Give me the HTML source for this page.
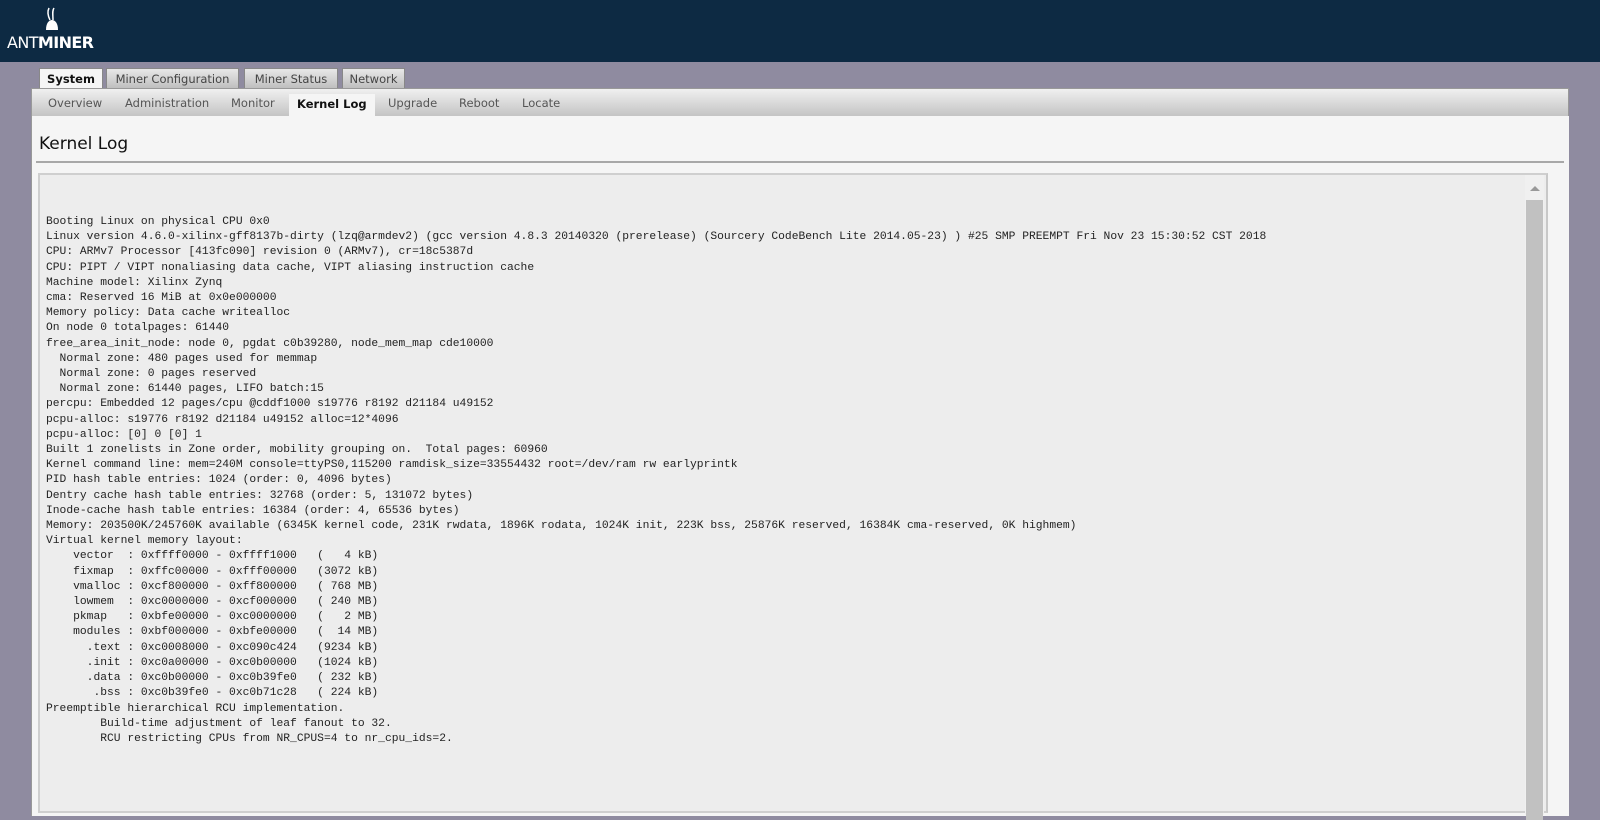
<!DOCTYPE html>
<html><head><meta charset="utf-8"><style>
*{margin:0;padding:0;box-sizing:border-box}
html,body{width:1600px;height:748px;overflow:hidden;background:#8f8ba0;font-family:"DejaVu Sans","Liberation Sans",sans-serif}
#hdr{position:absolute;left:0;top:0;width:1600px;height:62px;background:#0d2a43}
#logo{position:absolute;left:7px;top:33px;color:#fff;font-family:"DejaVu Sans",sans-serif;font-size:16px;letter-spacing:-0.6px}
#logo b{font-weight:bold}
#panel{position:absolute;left:31px;top:62px;width:1538px;height:686px}
.tab{position:absolute;top:6px;height:21px;background:linear-gradient(#e8e8e8,#bdbdbd);border:1px solid #888;border-bottom:none;font-size:11.5px;color:#444;text-align:center;line-height:20px;white-space:nowrap}
.tab.on{background:#f5f5f5;color:#111;font-weight:bold;height:22px}
#sub{position:absolute;left:0;top:26px;width:1538px;height:28px;background:linear-gradient(#f0f0f0,#c4c4c4);border:1px solid #999;border-bottom:none}
.st{position:absolute;top:7px;font-size:11.5px;color:#555;white-space:nowrap}
.st.on{top:5px;background:#f5f5f5;color:#111;font-weight:bold;height:23px;padding:3px 8px 0;}
#content{position:absolute;left:0;top:54px;width:1538px;height:640px;background:#f5f5f5;border-left:1px solid #999}
h2{position:absolute;left:7px;top:18px;font-size:17px;font-weight:normal;color:#111}
#line{position:absolute;left:4px;top:45px;width:1528px;height:2px;background:#a8a8a8}
#ta{position:absolute;left:6px;top:57px;width:1510px;height:640px;background:#ededed;border:2px solid #cfcfcf;border-right:2px solid #c8c8c8}
#sb{position:absolute;right:2px;top:0;width:19px;height:640px;background:#f0f0f0}
#thumb{position:absolute;left:1px;top:25px;width:17px;height:620px;background:#c1c1c1}
#arr{position:absolute;left:5px;top:11px;width:0;height:0;border-left:5px solid transparent;border-right:5px solid transparent;border-bottom:5px solid #999}
pre{position:absolute;left:6px;top:40px;font-family:"Liberation Mono",monospace;font-size:11.3px;line-height:15.2px;color:#222}
</style></head><body>
<div id="hdr">
<svg style="position:absolute;left:45px;top:7px" width="14" height="24" viewBox="0 0 14 24"><path d="M4 1 C2 5 3 9 5 13 M9 1 C7 4 8 8 8 13" stroke="#fff" stroke-width="1.5" fill="none"/><path d="M1 23 C1 16 4 13 7 13 C10 13 13 16 13 23 Z" fill="#fff"/></svg>
<div id="logo">ANT<b>MINER</b></div>
</div>
<div id="panel">
<div class="tab on" style="left:8px;width:64px">System</div>
<div class="tab" style="left:75px;width:133px">Miner Configuration</div>
<div class="tab" style="left:213px;width:94px">Miner Status</div>
<div class="tab" style="left:311px;width:63px">Network</div>
<div id="sub">
<span class="st" style="left:16px">Overview</span>
<span class="st" style="left:93px">Administration</span>
<span class="st" style="left:199px">Monitor</span>
<span class="st on" style="left:257px">Kernel Log</span>
<span class="st" style="left:356px">Upgrade</span>
<span class="st" style="left:427px">Reboot</span>
<span class="st" style="left:490px">Locate</span>
</div>
<div id="content" style="height:700px">
<h2>Kernel Log</h2>
<div id="line"></div>
<div id="ta">
<div id="sb"><div id="arr"></div><div id="thumb"></div></div>
<pre>Booting Linux on physical CPU 0x0
Linux version 4.6.0-xilinx-gff8137b-dirty (lzq@armdev2) (gcc version 4.8.3 20140320 (prerelease) (Sourcery CodeBench Lite 2014.05-23) ) #25 SMP PREEMPT Fri Nov 23 15:30:52 CST 2018
CPU: ARMv7 Processor [413fc090] revision 0 (ARMv7), cr=18c5387d
CPU: PIPT / VIPT nonaliasing data cache, VIPT aliasing instruction cache
Machine model: Xilinx Zynq
cma: Reserved 16 MiB at 0x0e000000
Memory policy: Data cache writealloc
On node 0 totalpages: 61440
free_area_init_node: node 0, pgdat c0b39280, node_mem_map cde10000
  Normal zone: 480 pages used for memmap
  Normal zone: 0 pages reserved
  Normal zone: 61440 pages, LIFO batch:15
percpu: Embedded 12 pages/cpu @cddf1000 s19776 r8192 d21184 u49152
pcpu-alloc: s19776 r8192 d21184 u49152 alloc=12*4096
pcpu-alloc: [0] 0 [0] 1
Built 1 zonelists in Zone order, mobility grouping on.  Total pages: 60960
Kernel command line: mem=240M console=ttyPS0,115200 ramdisk_size=33554432 root=/dev/ram rw earlyprintk
PID hash table entries: 1024 (order: 0, 4096 bytes)
Dentry cache hash table entries: 32768 (order: 5, 131072 bytes)
Inode-cache hash table entries: 16384 (order: 4, 65536 bytes)
Memory: 203500K/245760K available (6345K kernel code, 231K rwdata, 1896K rodata, 1024K init, 223K bss, 25876K reserved, 16384K cma-reserved, 0K highmem)
Virtual kernel memory layout:
    vector  : 0xffff0000 - 0xffff1000   (   4 kB)
    fixmap  : 0xffc00000 - 0xfff00000   (3072 kB)
    vmalloc : 0xcf800000 - 0xff800000   ( 768 MB)
    lowmem  : 0xc0000000 - 0xcf000000   ( 240 MB)
    pkmap   : 0xbfe00000 - 0xc0000000   (   2 MB)
    modules : 0xbf000000 - 0xbfe00000   (  14 MB)
      .text : 0xc0008000 - 0xc090c424   (9234 kB)
      .init : 0xc0a00000 - 0xc0b00000   (1024 kB)
      .data : 0xc0b00000 - 0xc0b39fe0   ( 232 kB)
       .bss : 0xc0b39fe0 - 0xc0b71c28   ( 224 kB)
Preemptible hierarchical RCU implementation.
        Build-time adjustment of leaf fanout to 32.
        RCU restricting CPUs from NR_CPUS=4 to nr_cpu_ids=2.
</pre>
</div>
</div>
</div>
</body></html>
